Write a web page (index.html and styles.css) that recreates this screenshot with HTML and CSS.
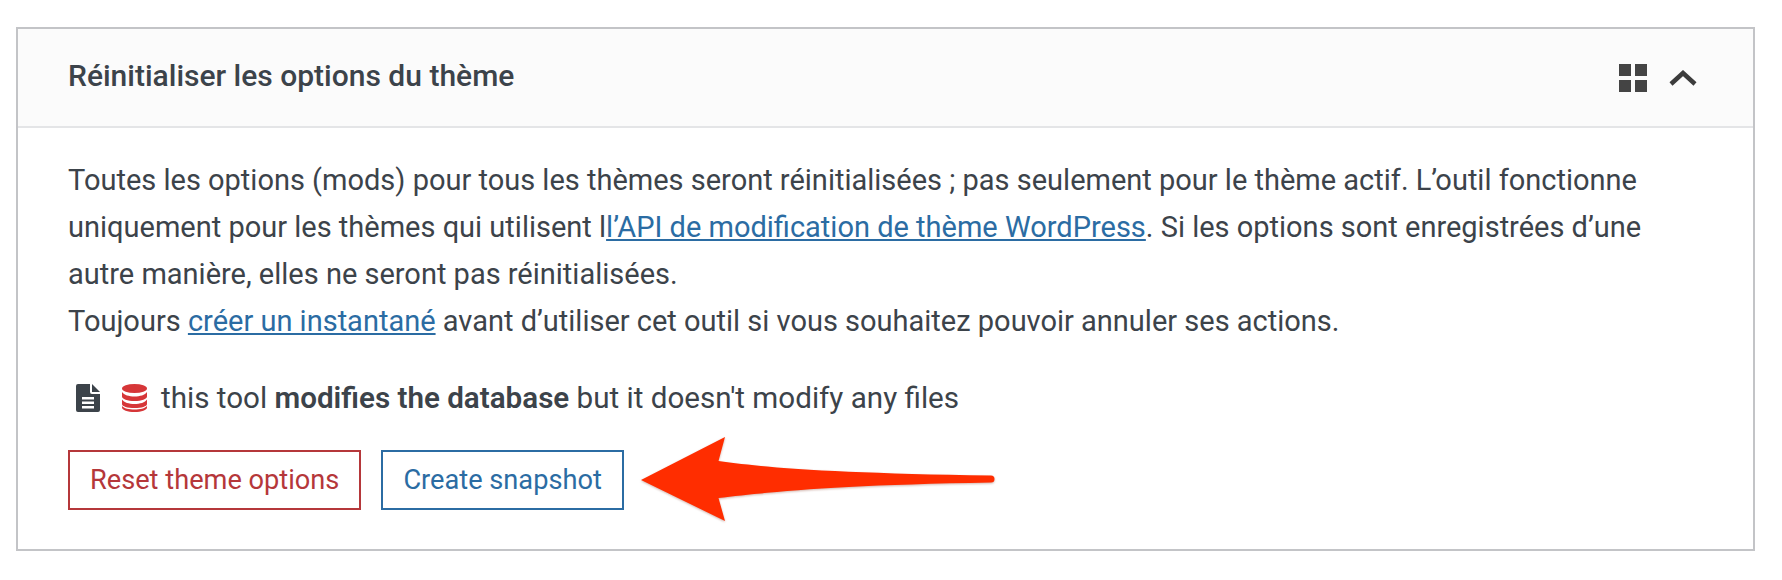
FILE: index.html
```html
<!DOCTYPE html>
<html lang="fr">
<head>
<meta charset="utf-8">
<title>Réinitialiser les options du thème</title>
<link rel="stylesheet" href="styles.css">
</head>
<body>
<section class="panel">
  <header class="panel-head">
    <h2 class="panel-title">Réinitialiser les options du thème</h2>
    <div class="panel-icons">
      <svg class="icon-grid" viewBox="0 0 28 28" width="28" height="28"><path d="M0 0h12v12H0zM16 0h12v12H16zM0 16h12v12H0zM16 16h12v12H16z"/></svg>
      <svg class="icon-chevron" viewBox="0 0 28 16" width="28" height="16"><path d="M2 14L14 3l12 11" /></svg>
    </div>
  </header>
  <div class="panel-body">
    <p class="desc">Toutes les options (mods) pour tous les thèmes seront réinitialisées ; pas seulement pour le thème actif. L’outil fonctionne uniquement pour les thèmes qui utilisent l<a href="#">l’API de modification de thème WordPress</a>. Si les options sont enregistrées d’une autre manière, elles ne seront pas réinitialisées.<br>Toujours <a href="#">créer un instantané</a> avant d’utiliser cet outil si vous souhaitez pouvoir annuler ses actions.</p>
    <div class="notice">
      <svg class="icon-file" viewBox="0 0 24 28" width="24" height="28"><path fill-rule="evenodd" d="M2 0h12v8a2 2 0 0 0 2 2h8v16a2 2 0 0 1-2 2H2a2 2 0 0 1-2-2V2a2 2 0 0 1 2-2zM6 13v2.500h12V13zM6 17.500V20h12v-2.500zM6 22v2.500h12V22z"/><path d="M16 0l8 8h-8z"/></svg>
      <svg class="icon-db" viewBox="0 0 25 28" width="25" height="28"><ellipse cx="12.500" cy="4.500" rx="12.500" ry="4.500"/><path d="M0 8c2 3 7 4.500 12.500 4.500S23 11 25 8v4.500c0 2.500-5.500 4.500-12.500 4.500S0 15 0 12.500zM0 15.500c2 3 7 4.500 12.500 4.500s10.500-1.500 12.500-4.500v4.500c0 2.500-5.500 4-12.500 4S0 22.500 0 20zM0 22c2 2.500 7 3.500 12.500 3.500S23 24.500 25 22v1.500c0 2.500-5.500 4.500-12.500 4.500S0 26 0 23.500z"/></svg>
      <span>this tool <strong>modifies the database</strong> but it doesn't modify any files</span>
    </div>
    <div class="actions">
      <a class="btn btn-danger" href="#">Reset theme options</a>
      <a class="btn btn-primary" href="#">Create snapshot</a>
      <svg class="arrow" viewBox="0 0 360 90" width="360" height="90"><path d="M3 44L87 1L80.500 25C130 32 200 37 353 39.500a3.500 3.500 0 0 1 0 7C200 49 130 56 80.500 62L87 85z"/></svg>
    </div>
  </div>
</section>
</body>
</html>
```
FILE: styles.css
```css
* { box-sizing: border-box; }
html, body { margin: 0; background: #fff; }
body { padding: 27px 27px 0 16px; font-family: Roboto, "Liberation Sans", sans-serif; color: #3c434a; height: 580px; overflow: hidden; }
.panel { border: 2px solid #c3c4c7; height: 524px; }
.panel-head { display: flex; align-items: center; justify-content: space-between; height: 99px; background: #fbfbfb; border-bottom: 2px solid #e4e5e7; padding: 0 56px 0 50px; }
.panel-title { margin: 0 0 4px; font-size: 30px; font-weight: 500; }
.panel-icons { display: flex; align-items: center; gap: 22px; }
.icon-grid { fill: #444; }
.icon-chevron { fill: none; stroke: #3c3c3c; stroke-width: 4.500; }
.panel-body { padding: 29px 50px 0; }
.desc { margin: 0; font-size: 29px; line-height: 47px; }
.desc a { color: #2b6ca3; }
.notice { display: flex; align-items: center; margin-top: 36px; font-size: 29.600px; }
.icon-file { fill: #3c434a; margin-left: 8px; }
.icon-db { fill: #d63638; margin-left: 22px; margin-right: 14px; }
.notice strong { font-weight: 600; }
.actions { display: flex; align-items: center; margin-top: 19px; }
.btn { display: flex; align-items: center; height: 60px; border: 2px solid; padding: 0 20px; font-size: 27.200px; text-decoration: none; background: #fff; }
.btn-danger { color: #b5373a; border-color: #b5373a; }
.btn-primary { color: #2b6ca3; border-color: #2b6ca3; margin-left: 20px; }
.arrow { fill: #ff2d00; margin-left: 14px; margin-top: 2px; filter: drop-shadow(0 1px 1px rgba(120,40,20,.35)); }
```
